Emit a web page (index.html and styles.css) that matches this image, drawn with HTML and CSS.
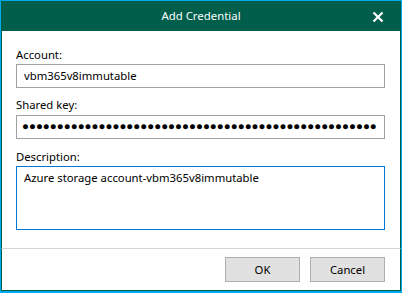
FILE: index.html
```html
<!DOCTYPE html>
<html>
<head>
<meta charset="utf-8">
<link rel="stylesheet" href="styles.css">
</head>
<body>
<div class="window">
  <div class="titlebar">
    <span class="title">Add Credential</span>
    <span class="close" aria-label="Close">
      <svg width="12" height="12" viewBox="0 0 12 12"><path d="M1.5 1.5 L10.5 10.5 M10.5 1.5 L1.5 10.5" stroke="#fff" stroke-width="2.2" fill="none"/></svg>
    </span>
  </div>
  <div class="content">
    <div class="label l1">Account:</div>
    <div class="field">vbm365v8immutable</div>
    <div class="label l2">Shared key:</div>
    <div class="field dots">●●●●●●●●●●●●●●●●●●●●●●●●●●●●●●●●●●●●●●●●●●●●●●●●●●●</div>
    <div class="label l3">Description:</div>
    <div class="field area">Azure storage account-vbm365v8immutable</div>
  </div>
  <div class="footer">
    <button class="btn">OK</button>
    <button class="btn">Cancel</button>
  </div>
</div>
</body>
</html>
```
FILE: styles.css
```css
html, body {
  margin: 0;
  padding: 0;
  background: #ffffff;
}
.window {
  width: 402px;
  height: 293px;
  box-sizing: border-box;
  border-style: solid;
  border-color: #00a9ec;
  border-width: 1px 1px 2px 1px;
  display: flex;
  flex-direction: column;
  font-family: "Noto Sans", sans-serif;
  font-size: 11.3px;
  color: #000;
}
.titlebar {
  height: 30px;
  background: #005e4a;
  color: #fff;
  display: flex;
  align-items: center;
  justify-content: center;
  position: relative;
  flex: none;
}
.title {
  font-size: 11.4px;
  line-height: 16px;
}
.close {
  position: absolute;
  right: 17px;
  top: 10px;
  width: 12px;
  height: 12px;
  display: flex;
}
.content {
  flex: 1;
  border-left: 1px solid #005e4a;
  border-right: 1px solid #005e4a;
  background: #fff;
  padding: 16px 15px 0 14px;
  display: flex;
  flex-direction: column;
}
.label {
  line-height: 16px;
  height: 16px;
  color: #000;
}
.l1 { margin-bottom: 1px; }
.l2 { margin-top: 9px; margin-bottom: 2px; }
.l3 { margin-top: 10px; margin-bottom: 1px; }
.field {
  height: 24px;
  box-sizing: border-box;
  border: 1px solid #a0a0a0;
  padding: 0 7px;
  line-height: 22px;
  white-space: nowrap;
  overflow: hidden;
}
.dots {
  font-family: "Liberation Mono", monospace;
  font-size: 11.6px;
  padding-left: 5px;
}
.area {
  height: 64px;
  border-color: #0078d7;
  line-height: 16px;
  padding-top: 3px;
}
.footer {
  flex: none;
  border: 1px solid #005e4a;
  border-top: 1px solid #d4d4d4;
  height: 43px;
  box-sizing: border-box;
  display: flex;
  justify-content: flex-end;
  align-items: flex-start;
  gap: 10px;
  padding: 8px 15px 0 0;
  background: #fff;
}
.btn {
  width: 75px;
  height: 25px;
  box-sizing: border-box;
  background: #e1e1e1;
  border: 1px solid #adadad;
  font-family: "Noto Sans", sans-serif;
  font-size: 11.3px;
  color: #000;
  padding: 0;
  margin: 0;
}
```
